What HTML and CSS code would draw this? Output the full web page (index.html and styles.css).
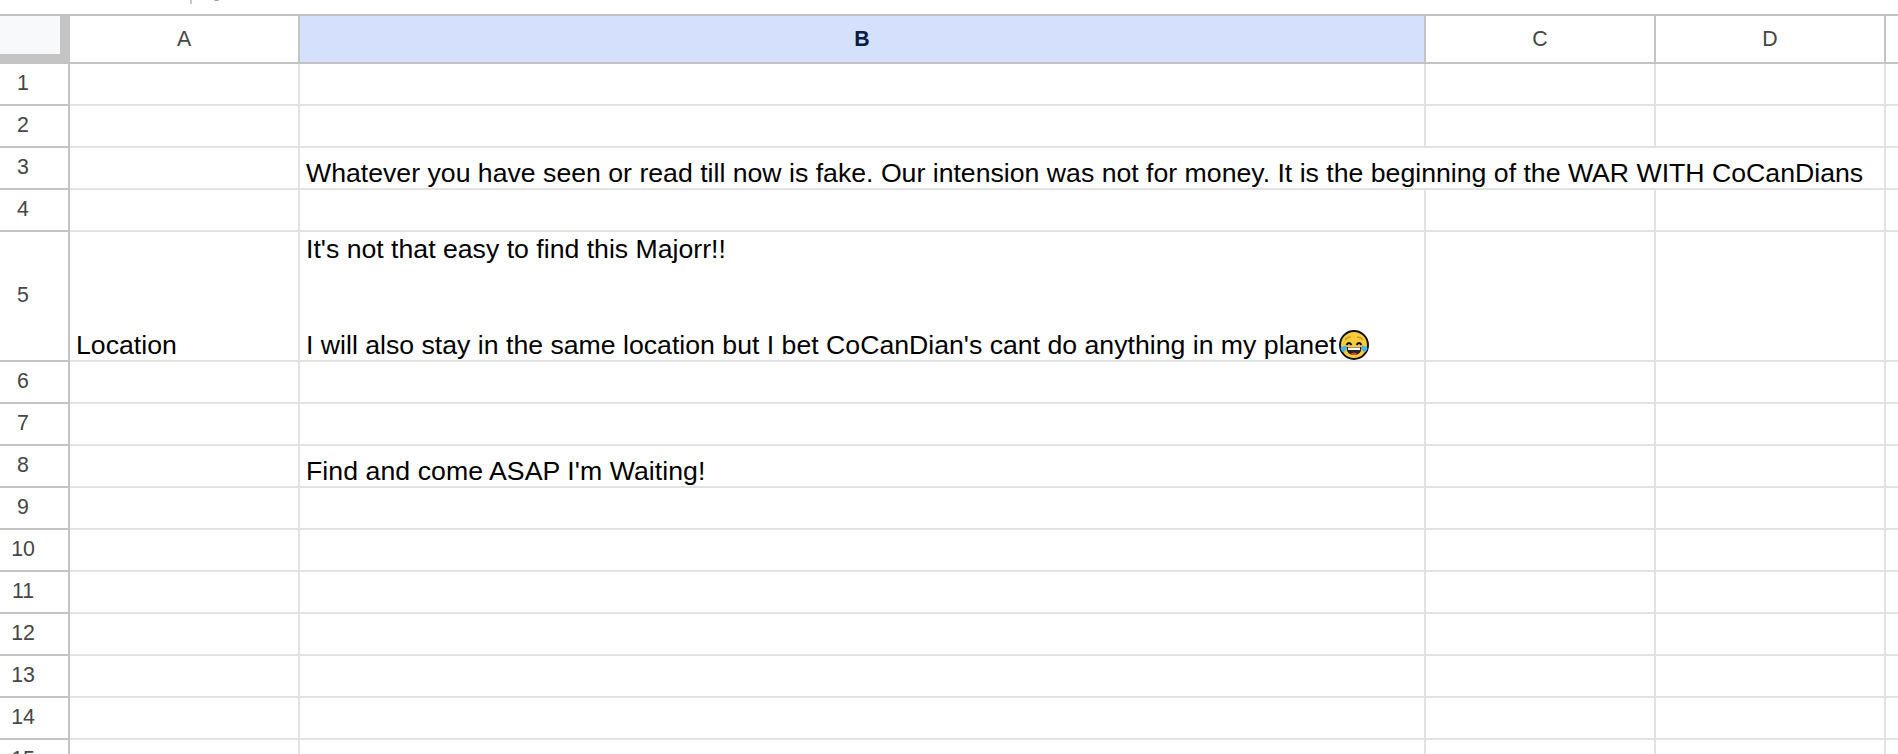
FILE: index.html
```html
<!DOCTYPE html>
<html lang="en">
<head>
<meta charset="utf-8">
<title>Spreadsheet</title>
<link rel="stylesheet" href="styles.css">
</head>
<body>
<div class="formula-bar">
  <svg class="formula-edge" width="40" height="4" viewBox="0 0 40 4"><path d="M0 0h2v4h-2z" fill="#c7c7c7"/><path d="M24 0h5l-1 1h-3z" fill="#999"/></svg>
</div>
<div class="sheet">
  <div class="row head"><div class="corner"></div><div class="col">A</div><div class="col selected">B</div><div class="col">C</div><div class="col">D</div><div class="col"></div></div>
  <div class="row"><div class="num">1</div><div class="cell"></div><div class="cell"></div><div class="cell"></div><div class="cell"></div><div class="cell"></div></div>
  <div class="row"><div class="num">2</div><div class="cell"></div><div class="cell"></div><div class="cell"></div><div class="cell"></div><div class="cell"></div></div>
  <div class="row"><div class="num">3</div><div class="cell"></div><div class="cell spill"><p class="text">Whatever you have seen or read till now is fake. Our intension was not for money. It is the beginning of the WAR WITH CoCanDians</p></div><div class="cell"></div></div>
  <div class="row"><div class="num">4</div><div class="cell"></div><div class="cell"></div><div class="cell"></div><div class="cell"></div><div class="cell"></div></div>
  <div class="row tall"><div class="num">5</div><div class="cell"><p class="text">Location</p></div><div class="cell"><p class="text">It's not that easy to find this Majorr!!<br><br><br>I will also stay in the same location but I bet CoCanDian's cant do anything in my planet<svg class="emoji" width="32" height="30" viewBox="0 0 32 30"><circle cx="16" cy="15" r="14" fill="#f8cd3d" stroke="#111" stroke-width="2"/><path d="M7 10q2-3 6-3M19 7q4 0 6 3" fill="none" stroke="#d39a20" stroke-width="1.6"/><path d="M8.500 15q2.500-4 5 0M18.500 15q2.500-4 5 0" fill="none" stroke="#111" stroke-width="2"/><path d="M8.500 17h15q0 8-7.500 8t-7.500-8z" fill="#222"/><path d="M10 17.500h12v2.500h-12z" fill="#fff"/><path d="M12.500 24q3.500-3 7 0q-3.500 2-7 0z" fill="#e84a35"/><path d="M8.500 15.500q0 7-4 6.500l-2-3q0-3 6-3.500zM23.500 15.500q0 7 4 6.500l2-3q0-3-6-3.500z" fill="#45b5ee"/></svg></p></div><div class="cell"></div><div class="cell"></div><div class="cell"></div></div>
  <div class="row"><div class="num">6</div><div class="cell"></div><div class="cell"></div><div class="cell"></div><div class="cell"></div><div class="cell"></div></div>
  <div class="row"><div class="num">7</div><div class="cell"></div><div class="cell"></div><div class="cell"></div><div class="cell"></div><div class="cell"></div></div>
  <div class="row"><div class="num">8</div><div class="cell"></div><div class="cell"><p class="text unkerned">Find and come ASAP I'm Waiting!</p></div><div class="cell"></div><div class="cell"></div><div class="cell"></div></div>
  <div class="row"><div class="num">9</div><div class="cell"></div><div class="cell"></div><div class="cell"></div><div class="cell"></div><div class="cell"></div></div>
  <div class="row"><div class="num">10</div><div class="cell"></div><div class="cell"></div><div class="cell"></div><div class="cell"></div><div class="cell"></div></div>
  <div class="row"><div class="num">11</div><div class="cell"></div><div class="cell"></div><div class="cell"></div><div class="cell"></div><div class="cell"></div></div>
  <div class="row"><div class="num">12</div><div class="cell"></div><div class="cell"></div><div class="cell"></div><div class="cell"></div><div class="cell"></div></div>
  <div class="row"><div class="num">13</div><div class="cell"></div><div class="cell"></div><div class="cell"></div><div class="cell"></div><div class="cell"></div></div>
  <div class="row"><div class="num">14</div><div class="cell"></div><div class="cell"></div><div class="cell"></div><div class="cell"></div><div class="cell"></div></div>
  <div class="row"><div class="num">15</div><div class="cell"></div><div class="cell"></div><div class="cell"></div><div class="cell"></div><div class="cell"></div></div>
</div>
</body>
</html>
```
FILE: styles.css
```css
* { box-sizing: border-box; }
body {
  margin: 0;
  height: 754px;
  overflow: hidden;
  background: #fff;
  font-family: "Liberation Sans", Arial, sans-serif;
}
.formula-bar { height: 14px; padding-left: 190px; }
.formula-edge { display: block; }
.sheet { border-top: 2px solid #c0c0c0; }
.row {
  display: grid;
  grid-template-columns: 70px 230px 1126px 230px 230px 12px;
  height: 42px;
}
.head { height: 48px; }
.tall { height: 130px; }
.corner {
  background: #f8f9fb;
  border-right: 10px solid #c4c4c4;
  border-bottom: 10px solid #c4c4c4;
}
.col {
  border-right: 2px solid #c4c4c4;
  border-bottom: 2px solid #c4c4c4;
  color: #444746;
  font-size: 21.33px;
  line-height: 46px;
  text-align: center;
}
.selected { background: #d5e0fc; color: #041e49; font-weight: bold; }
.num {
  display: flex;
  align-items: center;
  justify-content: center;
  padding: 0 22px 1px 0;
  border-right: 2px solid #c4c4c4;
  border-bottom: 2px solid #c4c4c4;
  color: #444746;
  font-size: 21.33px;
}
.cell {
  display: flex;
  align-items: flex-end;
  padding: 0 6px;
  border-right: 2px solid #e1e1e1;
  border-bottom: 2px solid #e1e1e1;
}
.spill { grid-column: span 3; }
.text {
  margin: 0 0 -1px;
  color: #000;
  font-size: 26.667px;
  line-height: 32px;
  white-space: nowrap;
}
.unkerned { letter-spacing: 0.055px; }
.emoji { margin: -4px 0 -6px 2px; vertical-align: 0; }
.col:last-child, .cell:last-child { border-right: 0; }
```
